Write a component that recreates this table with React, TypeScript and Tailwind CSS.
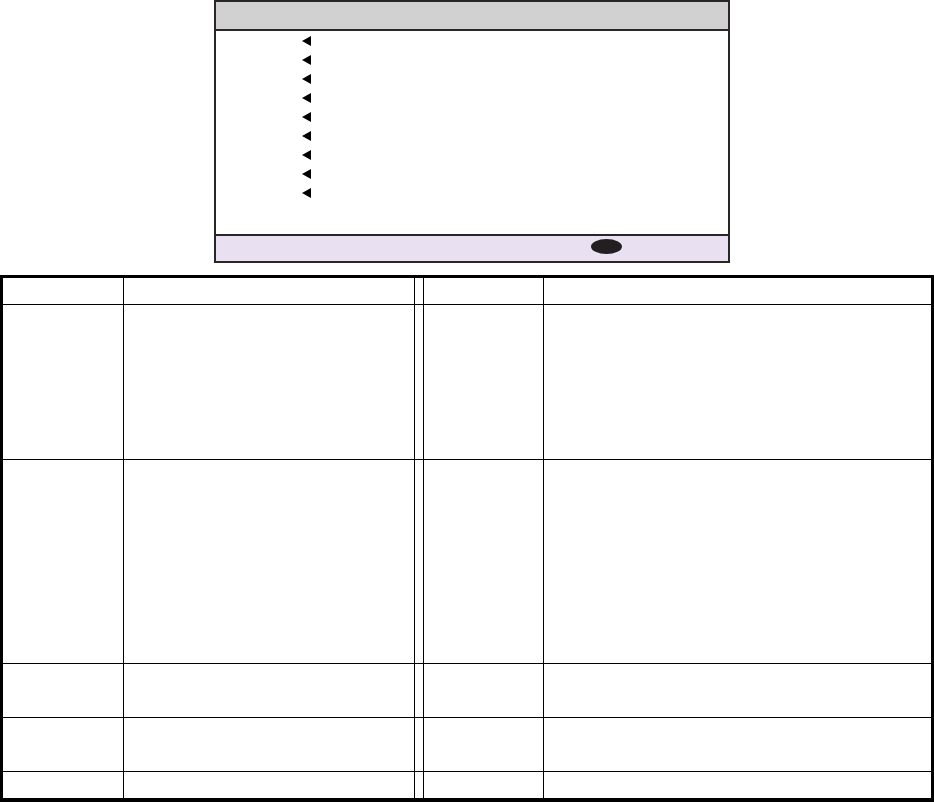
import React from 'react';

// row heights include the 1px bottom rule, except the last one
const rowHeights = ['h-[27px]', 'h-[155px]', 'h-[204px]', 'h-[54px]', 'h-[54px]', 'h-[26px]'];

// column widths include the 1px right rule, except the last one
const columns = [
  { id: 'param', width: 'w-[121px]' },
  { id: 'desc', width: 'w-[291px]' },
  { id: 'gap', width: 'w-[9px]' },
  { id: 'param2', width: 'w-[120px]' },
  { id: 'desc2', width: 'flex-1' },
];

function Marker() {
  return (
    <svg width="9" height="10" viewBox="0 0 9 10" className="block">
      <polygon points="0,5 9,0 9,10" fill="#000" />
    </svg>
  );
}

function MenuScreen() {
  const items = Array.from({ length: 9 });
  return (
    <div className="ml-[214px] w-[516px] h-[263px] border-2 border-[#2a2627] flex flex-col bg-white">
      {/* Title bar */}
      <div className="h-[29px] bg-[#d1d1d1] border-b-2 border-[#2a2627]" />

      {/* Menu items */}
      <div className="h-[203px] flex flex-col pl-[86px]">
        {items.map((_, i) => (
          <div key={i} className="h-[19px] flex items-center">
            <Marker />
          </div>
        ))}
      </div>

      {/* Footer */}
      <div className="flex-1 bg-[#e9e0f1] border-t-2 border-[#2a2627] pl-[375px] pt-[3px]">
        <div className="w-[31px] h-[15px] rounded-[50%] bg-[#231f20]" />
      </div>
    </div>
  );
}

function MenuTable() {
  return (
    <div className="mt-[12px] w-full border-[3px] border-b-4 border-black flex flex-col">
      {rowHeights.map((h, r) => (
        <div
          key={r}
          className={`flex ${h} ${r < rowHeights.length - 1 ? 'border-b border-black' : ''}`}
        >
          {columns.map((col, c) => (
            <div
              key={col.id}
              className={`${col.width} h-full ${c < columns.length - 1 ? 'border-r border-black' : ''}`}
            />
          ))}
        </div>
      ))}
    </div>
  );
}

export default function App() {
  return (
    <div className="w-[934px] h-[802px] bg-white overflow-hidden font-['Liberation_Sans',sans-serif]">
      <MenuScreen />
      <MenuTable />
    </div>
  );
}
